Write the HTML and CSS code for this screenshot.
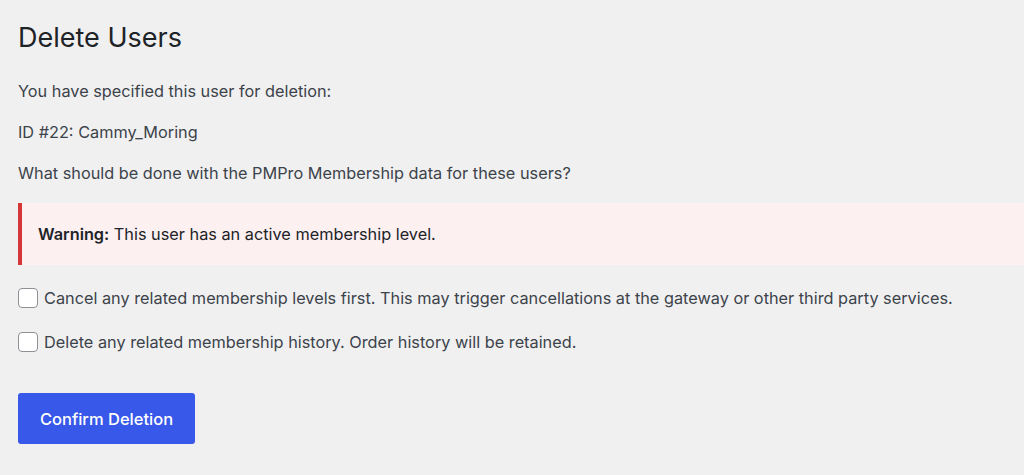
FILE: index.html
```html
<!DOCTYPE html>
<html lang="en">
<head>
    <meta charset="UTF-8">
    <meta name="viewport" content="width=device-width, initial-scale=1.0">
    <title>Delete Users</title>
    <link rel="stylesheet" href="styles.css">
</head>
<body>
    <div class="wrap">
        <h1>Delete Users</h1>

        <p>You have specified this user for deletion:</p>
        <p>ID #22: Cammy_Moring</p>
        <p>What should be done with the PMPro Membership data for these users?</p>

        <div class="notice-error">
            <p><strong>Warning:</strong> This user has an active membership level.</p>
        </div>

        <div class="option">
            <input type="checkbox" id="cancelLevels" name="cancelLevels">
            <label for="cancelLevels">Cancel any related membership levels first. This may trigger cancellations at the gateway or other third party services.</label>
        </div>
        <div class="option">
            <input type="checkbox" id="deleteHistory" name="deleteHistory">
            <label for="deleteHistory">Delete any related membership history. Order history will be retained.</label>
        </div>

        <button type="submit" class="button-primary">Confirm Deletion</button>
    </div>
</body>
</html>
```

FILE: styles.css
```css
/* Global Styles */
body {
    font-family: Inter, "Noto Sans", sans-serif;
    font-size: 16.3px;
    color: #3c434a;
    background-color: #f0f0f1;
    margin: 0;
    padding: 0;
}
.wrap {
    padding: 18px 0 0 18px;
}
h1 {
    font-size: 27px;
    font-weight: 400;
    color: #1d2327;
    margin: 4px 0 26px;
    line-height: 1.2;
}
p {
    margin: 0 0 19px;
    line-height: 22px;
}

/* Warning Notice */
.notice-error {
    background-color: #fcf0f1;
    border-left: 4px solid #d63638;
    padding: 20px 16px;
    margin: 19px 0 22px;
}
.notice-error p {
    margin: 0;
    color: #1d2327;
}
.notice-error strong {
    font-weight: 600;
}

/* Checkbox Options */
.option {
    display: flex;
    align-items: center;
    margin-bottom: 23px;
}
.option input {
    appearance: none;
    width: 20px;
    height: 20px;
    margin: 1px 6px 0 0;
    border: 1px solid #8c8f94;
    border-radius: 4px;
    background-color: #fff;
}
.option label {
    line-height: 20px;
}

/* Button */
.button-primary {
    display: block;
    margin-top: 41px;
    background-color: #3858e9;
    color: #fff;
    border: none;
    border-radius: 3px;
    width: 177px;
    height: 51px;
    font-family: Inter, "Noto Sans", sans-serif;
    font-size: 16.5px;
    font-weight: 500;
    cursor: pointer;
}
```
